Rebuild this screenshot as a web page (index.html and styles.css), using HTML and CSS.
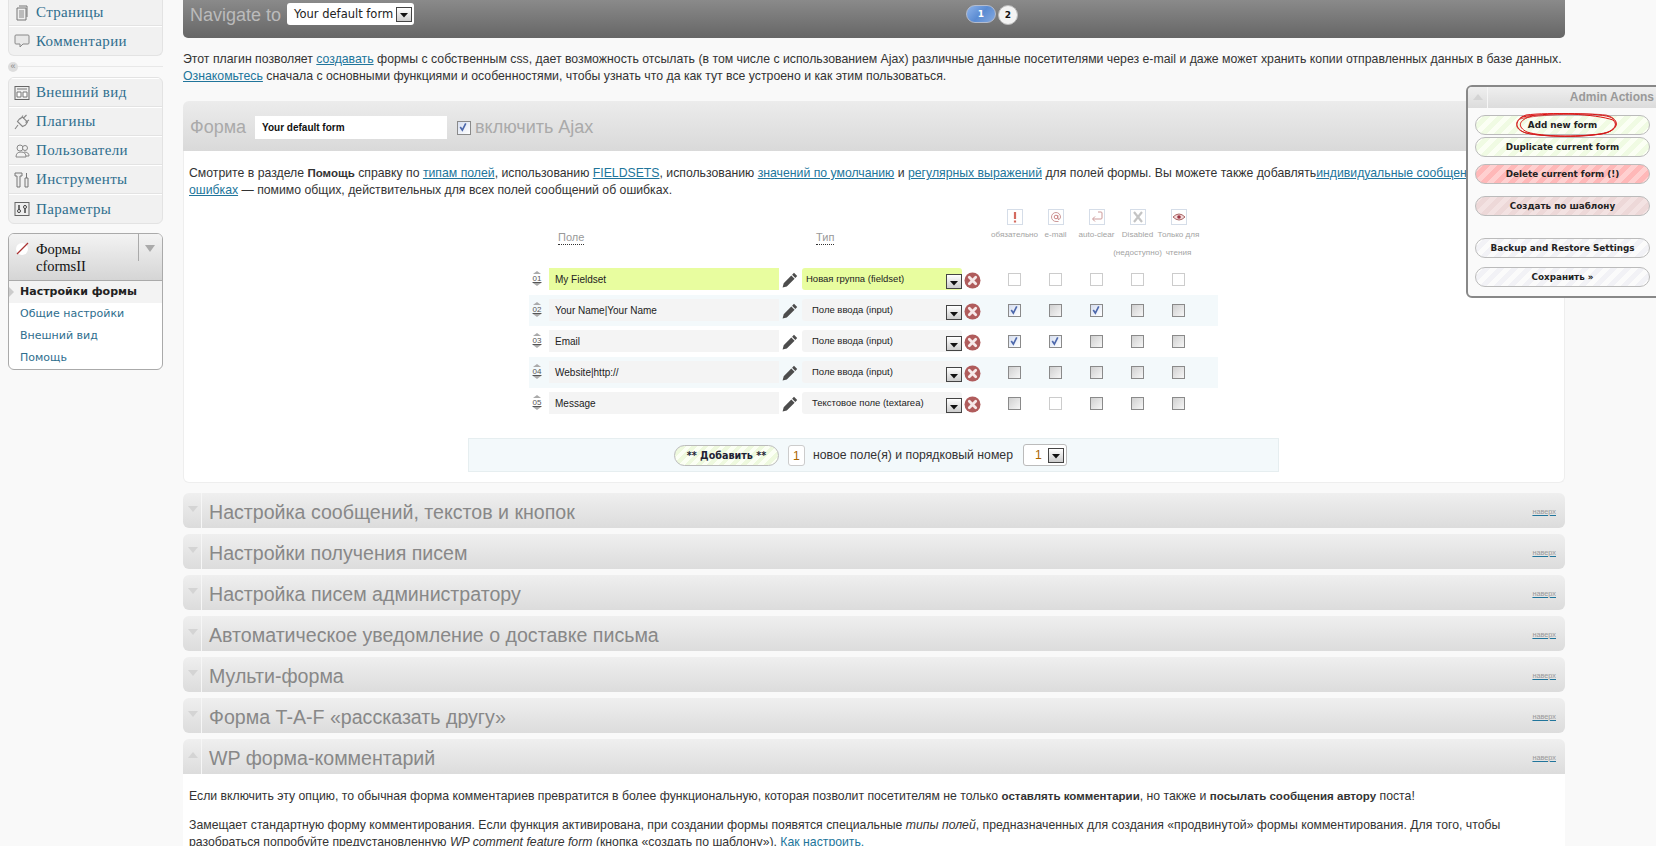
FILE: index.html
```html
<!DOCTYPE html>
<html lang="ru">
<head>
<meta charset="utf-8">
<title>cformsII</title>
<link rel="stylesheet" href="styles.css">
</head>
<body>
<svg class="sprite" width="0" height="0">
  <symbol id="pencil" viewBox="0 0 16 16"><path d="M12 .8l3.200 3.200-1.900 1.900-3.200-3.200zM9.300 3.400l3.300 3.300L4.800 14.500.6 15.600l1.100-4.400z" fill="#4d4d4d"/></symbol>
  <symbol id="del" viewBox="0 0 17 17"><circle cx="8.500" cy="8.500" r="8" fill="#b05c5c"/><path d="M5.300 5.300l6.400 6.400M11.700 5.300l-6.400 6.400" stroke="#f6e9e9" stroke-width="2.800" stroke-linecap="round"/></symbol>
  <symbol id="tick" viewBox="0 0 13 13"><path d="M3.500 6.500l2.300 3.300 3.700-7.300" fill="none" stroke="#4d68ac" stroke-width="1.800"/></symbol>
  <symbol id="drop" viewBox="0 0 8 5"><path d="M0 0h8l-4 4.500z" fill="#111"/></symbol>
</svg>

<div class="page">
  <nav class="sidebar">
    <ul class="menu-group">
      <li class="menu-item short"><svg class="mi" viewBox="0 0 16 16"><path d="M3 3h9v12H3zM5 1h8v11" fill="#eee" stroke="#777"/><path d="M5 6h5M5 8h5M5 10h5M5 12h5" stroke="#888"/></svg><a>Страницы</a></li>
      <li class="menu-item"><svg class="mi" viewBox="0 0 16 16"><path d="M2 2h12q1 0 1 1v7q0 1-1 1H9l-3 3v-3H2q-1 0-1-1V3q0-1 1-1z" fill="#e8e8e8" stroke="#888"/></svg><a>Комментарии</a></li>
    </ul>
    <div class="collapse"><span class="collapse-btn">«</span></div>
    <ul class="menu-group">
      <li class="menu-item"><svg class="mi" viewBox="0 0 16 16"><rect x="1" y="1.500" width="14" height="13" fill="#eee" stroke="#666"/><path d="M3 4h10M3 7h4v5H3zM9 7h4v5H9z" fill="#fff" stroke="#777"/></svg><a>Внешний вид</a></li>
      <li class="menu-item"><svg class="mi" viewBox="0 0 16 16"><path d="M1 15l3-4M3.500 7.500l5 5 3-1.500 2-3-5-5-3 2zM9 1.500L6.500 5M15 6l-3.500 2.500M12.500 1L9 4.500" fill="none" stroke="#888" stroke-width="1.100"/></svg><a>Плагины</a></li>
      <li class="menu-item"><svg class="mi" viewBox="0 0 16 16"><circle cx="6" cy="5" r="3" fill="#f2f2f2" stroke="#888"/><circle cx="11" cy="5" r="2.500" fill="#f2f2f2" stroke="#888"/><path d="M2 14q0-5 5-5t5 5zM10 9q5 0 5 4h-3" fill="#f2f2f2" stroke="#888"/></svg><a>Пользователи</a></li>
      <li class="menu-item"><svg class="mi" viewBox="0 0 16 16"><path d="M1 1h7v3H6v11H3V4H1zM11 6h3v9h-3zM12.500 1v5" fill="#eee" stroke="#777"/></svg><a>Инструменты</a></li>
      <li class="menu-item"><svg class="mi" viewBox="0 0 16 16"><rect x="1" y="1.500" width="14" height="13" fill="#eee" stroke="#666"/><path d="M5 4v8M11 4v8" stroke="#444" stroke-width="1.500"/><circle cx="5" cy="10" r="1.500" fill="#fff" stroke="#444"/><circle cx="11" cy="6" r="1.500" fill="#fff" stroke="#444"/></svg><a>Параметры</a></li>
    </ul>
    <div class="menu-current">
      <div class="current-head">
        <svg class="mi" viewBox="0 0 16 16"><circle cx="7" cy="8" r="6" fill="#fff"/><path d="M2 13L13 2" stroke="#a33" stroke-width="1.200"/></svg>
        <span class="current-title">Формы cformsII</span>
        <span class="current-toggle"><i class="tri-down"></i></span>
      </div>
      <ul class="submenu">
        <li class="sub-active"><i class="sub-arrow"></i>Настройки формы</li>
        <li>Общие настройки</li>
        <li>Внешний вид</li>
        <li>Помощь</li>
      </ul>
    </div>
  </nav>

  <main class="content">
    <header class="topbar">
      <span class="nav-label">Navigate to</span>
      <span class="nav-select">Your default form<span class="dropbtn"><svg class="dropglyph"><use href="#drop"/></svg></span></span>
      <span class="pager"><span class="pill">1</span><span class="dot">2</span></span>
    </header>

    <p class="intro">Этот плагин позволяет <a>создавать</a> формы с собственным css, дает возможность отсылать (в том числе с использованием Ajax) различные данные посетителями через e-mail и даже может хранить копии отправленных данных в базе данных. <a>Ознакомьтесь</a> сначала с основными функциями и особенностями, чтобы узнать что да как тут все устроено и как этим пользоваться.</p>

    <section class="form-panel">
      <div class="form-head">
        <span class="form-label">Форма</span>
        <span class="form-name">Your default form</span>
        <span class="cb on big"><svg><use href="#tick"/></svg></span>
        <span class="form-ajax">включить Ajax</span>
      </div>
      <div class="form-body">
        <p class="help">Смотрите в разделе <b>Помощь</b> справку по <a>типам полей</a>, использованию <a>FIELDSETS</a>, использованию <a>значений по умолчанию</a> и <a>регулярных выражений</a> для полей формы. Вы можете также добавлять<a>индивидуальные сообщения об ошибках</a> — помимо общих, действительных для всех полей сообщений об ошибках.</p>

        <div class="fields">
          <div class="fields-head">
            <span></span>
            <span class="col-title">Поле</span>
            <span></span>
            <span class="col-title type">Тип</span>
            <span></span>
            <div class="col-flag"><svg class="flag" viewBox="0 0 16 16"><rect x=".5" y=".5" width="15" height="15" fill="#fff" stroke="#d5dde8"/><path d="M8 3v7M8 11.500v2" stroke="#d46a5f" stroke-width="2.200"/></svg>обязательно</div>
            <div class="col-flag"><svg class="flag" viewBox="0 0 16 16"><rect x=".5" y=".5" width="15" height="15" fill="#fff" stroke="#d5dde8"/><path d="M10 10.500c1.500 0 2.500-1 2.500-2.500A4.500 4.500 0 1 0 8 12.500h2.500" fill="none" stroke="#c99"/><circle cx="8" cy="8" r="1.800" fill="none" stroke="#c88"/><path d="M9.800 6v3q0 1.500 1 1.500" fill="none" stroke="#c88"/></svg>e-mail</div>
            <div class="col-flag"><svg class="flag" viewBox="0 0 16 16"><rect x=".5" y=".5" width="15" height="15" fill="#fff" stroke="#d5dde8"/><path d="M9 3h3q1 0 1 1v5q0 1-1 1H4M6 7.500L3.500 10 6 12.500" fill="none" stroke="#c99"/></svg>auto-clear</div>
            <div class="col-flag"><svg class="flag" viewBox="0 0 16 16"><rect x=".5" y=".5" width="15" height="15" fill="#fff" stroke="#d5dde8"/><path d="M4 3l8 10M12 3L4 13" stroke="#c4c4c4" stroke-width="2.200"/></svg>Disabled<br>(недоступно)</div>
            <div class="col-flag"><svg class="flag" viewBox="0 0 16 16"><rect x=".5" y=".5" width="15" height="15" fill="#fff" stroke="#d5dde8"/><path d="M2 8q6-6 12 0-6 6-12 0z" fill="#f4dada" stroke="#a66"/><circle cx="8" cy="8" r="1.800" fill="#934"/></svg>Только для<br>чтения</div>
          </div>

          <div class="field-row">
            <span class="num"><i class="tri-up"></i><u>01</u><i class="tri-dn"></i></span>
            <span class="fname group">My Fieldset</span>
            <svg class="pencil"><use href="#pencil"/></svg>
            <span class="ftype group">Новая группа (fieldset)<span class="dropbtn"><svg class="dropglyph"><use href="#drop"/></svg></span></span>
            <svg class="del"><use href="#del"/></svg>
            <span class="cb blank"></span><span class="cb blank"></span><span class="cb blank"></span><span class="cb blank"></span><span class="cb blank"></span>
          </div>
          <div class="field-row band">
            <span class="num"><i class="tri-up"></i><u>02</u><i class="tri-dn"></i></span>
            <span class="fname">Your Name|Your Name</span>
            <svg class="pencil"><use href="#pencil"/></svg>
            <span class="ftype">Поле ввода (input)<span class="dropbtn"><svg class="dropglyph"><use href="#drop"/></svg></span></span>
            <svg class="del"><use href="#del"/></svg>
            <span class="cb on"><svg><use href="#tick"/></svg></span><span class="cb"></span><span class="cb on"><svg><use href="#tick"/></svg></span><span class="cb"></span><span class="cb"></span>
          </div>
          <div class="field-row">
            <span class="num"><i class="tri-up"></i><u>03</u><i class="tri-dn"></i></span>
            <span class="fname">Email</span>
            <svg class="pencil"><use href="#pencil"/></svg>
            <span class="ftype">Поле ввода (input)<span class="dropbtn"><svg class="dropglyph"><use href="#drop"/></svg></span></span>
            <svg class="del"><use href="#del"/></svg>
            <span class="cb on"><svg><use href="#tick"/></svg></span><span class="cb on"><svg><use href="#tick"/></svg></span><span class="cb"></span><span class="cb"></span><span class="cb"></span>
          </div>
          <div class="field-row band">
            <span class="num"><i class="tri-up"></i><u>04</u><i class="tri-dn"></i></span>
            <span class="fname">Website|http://</span>
            <svg class="pencil"><use href="#pencil"/></svg>
            <span class="ftype">Поле ввода (input)<span class="dropbtn"><svg class="dropglyph"><use href="#drop"/></svg></span></span>
            <svg class="del"><use href="#del"/></svg>
            <span class="cb"></span><span class="cb"></span><span class="cb"></span><span class="cb"></span><span class="cb"></span>
          </div>
          <div class="field-row">
            <span class="num"><i class="tri-up"></i><u>05</u><i class="tri-dn"></i></span>
            <span class="fname">Message</span>
            <svg class="pencil"><use href="#pencil"/></svg>
            <span class="ftype">Текстовое поле (textarea)<span class="dropbtn"><svg class="dropglyph"><use href="#drop"/></svg></span></span>
            <svg class="del"><use href="#del"/></svg>
            <span class="cb"></span><span class="cb blank"></span><span class="cb"></span><span class="cb"></span><span class="cb"></span>
          </div>
        </div>

        <div class="addbar">
          <span class="add-btn">** Добавить **</span>
          <span class="mini-input">1</span>
          <span class="add-text">новое поле(я) и порядковый номер</span>
          <span class="mini-select">1<span class="dropbtn"><svg class="dropglyph"><use href="#drop"/></svg></span></span>
        </div>
      </div>
    </section>

    <div class="sec"><span class="sec-toggle"><i class="tri-down"></i></span><h2>Настройка сообщений, текстов и кнопок</h2><a class="totop">наверх</a></div>
    <div class="sec"><span class="sec-toggle"><i class="tri-down"></i></span><h2>Настройки получения писем</h2><a class="totop">наверх</a></div>
    <div class="sec"><span class="sec-toggle"><i class="tri-down"></i></span><h2>Настройка писем администратору</h2><a class="totop">наверх</a></div>
    <div class="sec"><span class="sec-toggle"><i class="tri-down"></i></span><h2>Автоматическое уведомление о доставке письма</h2><a class="totop">наверх</a></div>
    <div class="sec"><span class="sec-toggle"><i class="tri-down"></i></span><h2>Мульти-форма</h2><a class="totop">наверх</a></div>
    <div class="sec"><span class="sec-toggle"><i class="tri-down"></i></span><h2>Форма T-A-F «рассказать другу»</h2><a class="totop">наверх</a></div>
    <div class="sec open"><span class="sec-toggle"><i class="tri-up-sm"></i></span><h2>WP форма-комментарий</h2><a class="totop">наверх</a></div>
    <div class="sec-body">
      <p>Если включить эту опцию, то обычная форма комментариев превратится в более функциональную, которая позволит посетителям не только <b>оставлять комментарии</b>, но также и <b>посылать сообщения автору</b> поста!</p>
      <p>Замещает стандартную форму комментирования. Если функция активирована, при создании формы появятся специальные <i>типы полей</i>, предназначенных для создания «продвинутой» формы комментирования. Для того, чтобы разобраться попробуйте предустановленную <i>WP comment feature form</i> (кнопка «создать по шаблону»). <a>Как настроить.</a></p>
    </div>
  </main>
</div>

<aside class="admin">
  <div class="admin-head"><span class="admin-toggle"><i class="tri-up-sm"></i></span><span class="admin-title">Admin Actions</span></div>
  <div class="admin-btns">
    <span class="btn green">Add new form</span>
    <span class="btn green">Duplicate current form</span>
    <span class="btn red gap-s">Delete current form (!)</span>
    <span class="btn rose gap-m">Создать по шаблону</span>
    <span class="btn grey gap-l">Backup and Restore Settings</span>
    <span class="btn grey gap-n">Сохранить »</span>
  </div>
  <svg class="scribble" viewBox="0 0 106 26"><path d="M8 5C30 1 80 0 96 5c10 4 8 12-4 16-22 5-62 4-80 0C0 17 0 8 12 3" fill="none" stroke="#d11" stroke-width="1"/><path d="M12 3C36 0 82 2 99 8c6 6 0 12-12 14-26 3-58 3-74-2C3 15 4 8 18 4" fill="none" stroke="#d11" stroke-width="1"/><path d="M6 7C24 2 76 1 92 3c12 3 13 12 2 17-20 6-66 5-82 1C1 18-1 10 9 4" fill="none" stroke="#c22" stroke-width=".8"/></svg>
</aside>
</body>
</html>
```
FILE: styles.css
```css
* { box-sizing: border-box; }
html, body { margin: 0; height: 846px; overflow: hidden; }
body { background: #f9f9f9; font: 12.250px/17px "Liberation Sans", Arial, sans-serif; color: #333; position: relative; }
ul { list-style: none; margin: 0; padding: 0; }
a { color: #21759b; text-decoration: underline; }
p { margin: 0; }
p b { font-size: 11.500px; }
.sprite { position: absolute; }

.page { display: flex; align-items: flex-start; height: 846px; overflow: hidden; }
.sidebar { flex: none; width: 155px; margin-left: 8px; }
.content { flex: none; width: 1382px; margin-left: 20px; }

/* sidebar */
.menu-group { border: 1px solid #e3e3e3; border-radius: 6px; background: #f1f1f1; overflow: hidden; width: 155px; }
.menu-group:first-child { border-top: 0; border-radius: 0 0 6px 6px; }
.menu-item { display: flex; align-items: center; height: 29px; padding-left: 5px; gap: 6px; border-bottom: 1px solid #e3e3e3; border-top: 1px solid #fff; font: 15px "Liberation Serif", serif; letter-spacing: .35px; }
.menu-item:last-child { border-bottom: 0; }
.menu-item.short { height: 26px; border-top: 0; }
.menu-item a { color: #2e6e8e; text-decoration: none; }
.mi { width: 16px; height: 16px; flex: none; }
.collapse { height: 21px; display: flex; align-items: center; position: relative; background: linear-gradient(#e8e8e8, #e8e8e8) 0 50%/100% 1px no-repeat; }
.collapse-btn { width: 10px; height: 10px; border-radius: 50%; background: #ddd; font: 9px/9px "Liberation Sans", sans-serif; color: #888; text-align: center; }
.menu-current { margin-top: 9px; border: 1px solid #aaa; border-radius: 6px; background: #fff; width: 155px; }
.current-head { display: flex; align-items: flex-start; height: 47px; background: linear-gradient(#f3f3f3, #d5d5d5); border-bottom: 1px solid #aaa; border-radius: 5px 5px 0 0; padding: 7px 0 0 6px; gap: 5px; font: 14.500px/17px "Liberation Serif", serif; color: #111; }
.current-title { width: 98px; }
.current-toggle { flex: none; width: 24px; height: 27px; margin-top: -7px; border-left: 1px solid #aaa; padding: 11px 0 0 6px; margin-left: -1px; }
.tri-down { display: block; width: 0; height: 0; border: 5px solid transparent; border-top: 7px solid #aaa; border-bottom: 0; }
.submenu { font: 11px/22px "DejaVu Sans", Verdana, sans-serif; color: #2e6e8e; }
.submenu li { height: 22px; padding-left: 11px; position: relative; }
.sub-active { background: #f3f3f3; color: #222; font-weight: bold; }
.sub-arrow { position: absolute; left: 0; top: 6px; width: 0; height: 0; border: 5px solid transparent; border-left: 5px solid #ccc; border-right: 0; }

/* top bar */
.topbar { height: 38px; display: flex; align-items: flex-start; position: relative; padding: 3px 0 0 7px; background: linear-gradient(#8a8a8a, #666); border-radius: 0 0 5px 5px; }
.nav-label { font-size: 18px; line-height: 24px; color: #bbb; width: 97px; }
.nav-select { display: flex; align-items: center; justify-content: space-between; width: 127px; height: 22px; background: #fff; border-radius: 3px; padding: 0 2px 0 7px; font: 11.500px "DejaVu Sans", Verdana, sans-serif; color: #222; }
.pager { position: absolute; left: 783px; top: 5px; display: flex; gap: 2px; font: bold 9px/18px "DejaVu Sans", sans-serif; }
.pill { width: 30px; height: 18px; border-radius: 9px; background: linear-gradient(135deg, #8fb4ea, #5a8bd2 50%, #86aae0); border: 1px solid #b5bccc; color: #fff; text-align: center; line-height: 16px; }
.dot { width: 20px; height: 20px; border-radius: 50%; background: #f3f3f3; border: 1px solid #bbb; color: #111; text-align: center; }
.dropbtn { display: flex; align-items: center; justify-content: center; width: 16px; height: 15px; border: 1px solid #444; background: linear-gradient(#fff, #ccc); flex: none; }
.dropglyph { width: 8px; height: 5px; margin-top: 3px; }

.intro { margin: 13px 0 16px; font-size: 12.290px; }
.form-panel { border-radius: 6px; }
.form-head { height: 50px; display: flex; align-items: center; background: linear-gradient(#ececec, #d9d9d9); border-radius: 6px 6px 0 0; padding: 3px 0 0 7px; }
.form-label { font-size: 18px; color: #aaa; width: 65px; }
.form-name { width: 192px; height: 23px; background: #fff; font: bold 10px/23px "Liberation Sans", Arial, sans-serif; color: #111; padding-left: 7px; margin-right: 10px; }
.form-ajax { font-size: 18px; color: #aaa; margin-left: 4px; }
.form-body { background: #fff; border: 1px solid #eee; border-top: 0; border-radius: 0 0 6px 6px; padding: 14px 6px 10px 5px; height: 332px; }
.help { height: 40px; padding-right: 30px; }

/* field table */
.fields { width: 689px; margin: 0 auto; }
.fields-head, .field-row { display: grid; grid-template-columns: 20px 230px 23px 160px 32px repeat(5, 41px) 19px; }
.fields-head { height: 59px; align-items: start; }
.col-title { margin: 25px 0 0 9px; justify-self: start; font-size: 11px; line-height: 14px; color: #999; border-bottom: 1px dotted #333; }
.col-title.type { margin-left: 14px; }
.col-flag { display: flex; flex-direction: column; align-items: center; padding-top: 4px; font-size: 8.100px; line-height: 18px; color: #a4a4a4; text-align: center; white-space: nowrap; }
.flag { width: 16px; height: 16px; display: block; margin-bottom: 1px; }
.field-row { height: 31px; padding-top: 4px; font-size: 10px; color: #222; }
.field-row.band { background: #f3f9fb; }
.num { display: flex; flex-direction: column; align-items: center; width: 16px; margin-top: 3px; font-size: 8px; line-height: 9px; color: #555; }
.tri-up, .tri-dn { width: 0; height: 0; border: 4px solid transparent; }
.tri-up { border-bottom: 3px solid #aaa; border-top: 0; }
.tri-dn { border-top: 3px solid #aaa; border-bottom: 0; }
.tri-up-sm { display: block; width: 0; height: 0; border: 5px solid transparent; border-bottom: 6px solid #d4d4d4; border-top: 0; }
.fname { height: 22px; width: 230px; background: #f4f4f4; padding-left: 6px; line-height: 23px; }
.fname.group, .ftype.group { background: #e8fd9f; }
.pencil { width: 16px; height: 16px; margin: 4px 0 0 3px; }
.ftype { display: flex; align-items: flex-end; justify-content: space-between; height: 22px; width: 160px; background: #f4f4f4; border-radius: 3px; padding-left: 10px; font-size: 9.500px; line-height: 23px; white-space: nowrap; }
.ftype.group { padding-left: 4px; }
.ftype .dropbtn { margin-bottom: 1px; }
.del { width: 17px; height: 17px; margin: 4px 0 0 2px; }
.cb { width: 13px; height: 13px; justify-self: center; margin-top: 5px; background: linear-gradient(135deg, #d0d0d0, #f6f6f6); border: 1.500px solid #8a8a8a; display: block; }
.cb svg { display: block; width: 12px; height: 12px; margin: -1px 0 0 -1px; }
.cb.blank { background: #fff; border: 1px solid #ccc; }
.cb.on { background: linear-gradient(135deg, #d7dff0, #fff); border-color: #8a8a8a; }
.cb.big { margin: 0; width: 14px; height: 14px; }

.addbar { width: 811px; height: 34px; margin: 19px auto 0; background: #f3f9fb; border: 1px solid #e6eef0; display: flex; align-items: center; padding-left: 205px; color: #333; }
.add-btn { width: 105px; height: 21px; border: 1px solid #bbb; border-radius: 11px; background: repeating-linear-gradient(135deg, #fbfff4 0 4px, #eef9de 4px 8px); text-align: center; font: bold 9.600px/19px "DejaVu Sans", sans-serif; color: #223; }
.mini-input { width: 17px; height: 21px; margin-left: 9px; border: 1px solid #ccc; border-radius: 3px; background: #fff; color: #a60; text-align: center; line-height: 20px; }
.add-text { width: 193px; margin-left: 8px; white-space: nowrap; }
.mini-select { display: flex; align-items: center; justify-content: space-between; width: 44px; height: 22px; margin-left: 17px; border: 1px solid #bbb; border-radius: 3px; background: #fff; color: #a60; padding: 0 2px 0 11px; }

/* sections */
.sec { height: 35px; margin-top: 6px; display: flex; align-items: center; background: linear-gradient(#efefef, #dcdcdc); border-radius: 6px; color: #888; }
.form-panel + .sec { margin-top: 10px; }
.sec-toggle { width: 19px; height: 100%; border-right: 1px solid #f6f6f6; flex: none; padding: 13px 0 0 5px; }
.sec-toggle .tri-down { border-top-color: #d4d4d4; border-width: 5px; border-top-width: 6px; border-bottom: 0; }
.sec h2 { margin: 3px 0 0 7px; flex: 1; font-weight: normal; font-size: 19.600px; line-height: 35px; color: #888; white-space: nowrap; }
.totop { font-size: 7.300px; color: #999; margin: 2px 9px 0 0; text-decoration-color: #21759b; }
.sec.open { border-radius: 6px 6px 0 0; }
.sec-body { background: #fff; padding: 14px 5px 0 6px; }
.sec-body p { margin-bottom: 12px; }

/* admin */
.admin { position: absolute; left: 1466px; top: 85px; width: 200px; height: 213px; border: 2px solid #888; border-radius: 6px; background: #fafafa; overflow: hidden; }
.admin-head { height: 21px; display: flex; background: linear-gradient(#efefef, #dcdcdc); }
.admin-toggle { width: 20px; border-right: 1px solid #f6f6f6; padding: 7px 0 0 5px; }
.admin-title { width: 166px; text-align: right; font: bold 12px/21px "Liberation Sans", sans-serif; color: #999; white-space: nowrap; }
.admin-btns { display: flex; flex-direction: column; padding: 7px 0 0 7px; }
.btn { width: 175px; height: 20px; flex: none; border: 1px solid #bbb; border-radius: 10px; text-align: center; font: bold 8.800px/18px "DejaVu Sans", Verdana, sans-serif; color: #222; margin-bottom: 2px; }
.green { background: repeating-linear-gradient(135deg, #fbfff4 0 5px, #f0fbe3 5px 10px); }
.red { background: repeating-linear-gradient(135deg, #ffd0d0 0 5px, #ffb8b8 5px 10px); }
.rose { background: repeating-linear-gradient(135deg, #f3e2e2 0 5px, #edd8d8 5px 10px); }
.grey { background: repeating-linear-gradient(135deg, #fbfbfb 0 5px, #f2f2f6 5px 10px); }
.gap-s { margin-top: 5px; }
.gap-m { margin-top: 10px; }
.gap-l { margin-top: 20px; }
.gap-n { margin-top: 7px; }
.scribble { position: absolute; left: 46px; top: 25px; width: 106px; height: 26px; }
```
